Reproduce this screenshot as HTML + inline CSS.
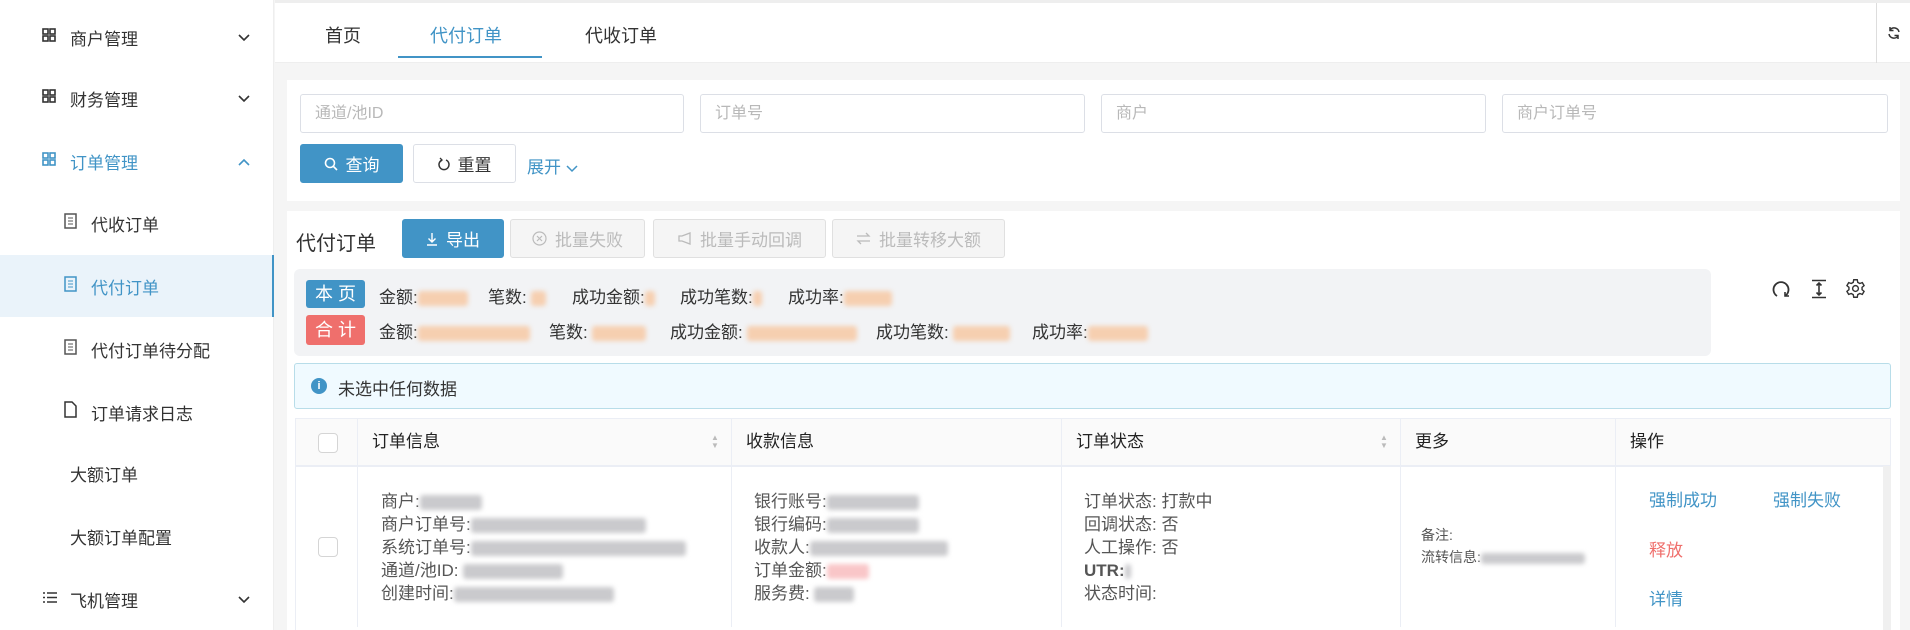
<!DOCTYPE html>
<html><head><meta charset="utf-8"><style>
*{box-sizing:border-box;margin:0;padding:0}
body{width:1910px;height:630px;overflow:hidden;background:#f5f5f5;font-family:"Liberation Sans","Noto Sans CJK SC",sans-serif;color:#333;position:relative}
.abs{position:absolute}
.side{left:0;top:0;width:274px;height:630px;background:#fff;border-right:1px solid #eee}
.mi{position:absolute;left:0;width:274px;height:62px;display:flex;align-items:center;font-size:17px;color:#333}
.mi .ic{position:absolute;left:42px}
.mi .tx{position:absolute;left:70px}
.mi .ar{position:absolute;left:238px;font-size:13px}
.sub .tx{left:91px}
.sub .ic{left:64px}
.blur{display:inline-block;filter:blur(2.5px);height:15px;vertical-align:middle;border-radius:3px}
.g{background:#cacacd}.o{background:#f6cfb0}.p{background:#f9c6c8}
.btn{position:absolute;height:39px;border:1px solid #dcdfe6;border-radius:3px;font-size:16px;display:flex;align-items:center;justify-content:center;gap:8px;background:#fff;color:#333}
.dis{background:#f5f5f5;color:#bbb;border-color:#e0e0e0}
.inp{position:absolute;top:94px;height:39px;border:1px solid #dcdfe6;border-radius:3px;padding-left:14px;line-height:37px;font-size:16px;color:#b8b8b8;background:#fff}
.th{position:absolute;top:418px;height:48px;line-height:48px;font-size:17px;color:#222;padding-left:14px;border-right:1px solid #ebeef5}
.td{position:absolute;top:466px;height:161px;border-right:1px solid #ebeef5;font-size:17px;color:#555}
.ln{position:absolute;line-height:23px;white-space:nowrap}
.lbl{font-size:17px;color:#333;white-space:nowrap}
</style></head><body>

<div class="abs side">
  <div class="mi" style="top:6px"><span class="ic"><svg width="14" height="14"><g fill="none" stroke="#333" stroke-width="1.6"><rect x="1" y="1" width="5" height="5"/><rect x="8" y="1" width="5" height="5"/><rect x="1" y="8" width="5" height="5"/><rect x="8" y="8" width="5" height="5"/></g></svg></span><span class="tx">商户管理</span><span class="ar"><svg width="12" height="8"><path d="M1 1l5 5 5-5" fill="none" stroke="#333" stroke-width="1.6"/></svg></span></div>
  <div class="mi" style="top:67px"><span class="ic"><svg width="14" height="14"><g fill="none" stroke="#333" stroke-width="1.6"><rect x="1" y="1" width="5" height="5"/><rect x="8" y="1" width="5" height="5"/><rect x="1" y="8" width="5" height="5"/><rect x="8" y="8" width="5" height="5"/></g></svg></span><span class="tx">财务管理</span><span class="ar"><svg width="12" height="8"><path d="M1 1l5 5 5-5" fill="none" stroke="#333" stroke-width="1.6"/></svg></span></div>
  <div class="mi" style="top:130px;color:#4194c6"><span class="ic"><svg width="14" height="14"><g fill="none" stroke="#4194c6" stroke-width="1.6"><rect x="1" y="1" width="5" height="5"/><rect x="8" y="1" width="5" height="5"/><rect x="1" y="8" width="5" height="5"/><rect x="8" y="8" width="5" height="5"/></g></svg></span><span class="tx">订单管理</span><span class="ar"><svg width="12" height="8"><path d="M1 7l5-5 5 5" fill="none" stroke="#4194c6" stroke-width="1.6"/></svg></span></div>
  <div class="mi sub" style="top:192px"><span class="ic"><svg width="13" height="16"><rect x="1" y="1" width="11" height="14" fill="none" stroke="#555" stroke-width="1.5"/><path d="M4 5h5M4 8h5M4 11h5" stroke="#555"/></svg></span><span class="tx">代收订单</span></div>
  <div class="mi sub" style="top:255px;background:#eaf3fa;color:#4194c6;border-right:2px solid #4194c6"><span class="ic"><svg width="13" height="16"><rect x="1" y="1" width="11" height="14" fill="none" stroke="#4194c6" stroke-width="1.5"/><path d="M4 5h5M4 8h5M4 11h5" stroke="#4194c6"/></svg></span><span class="tx">代付订单</span></div>
  <div class="mi sub" style="top:318px"><span class="ic"><svg width="13" height="16"><rect x="1" y="1" width="11" height="14" fill="none" stroke="#555" stroke-width="1.5"/><path d="M4 5h5M4 8h5M4 11h5" stroke="#555"/></svg></span><span class="tx">代付订单待分配</span></div>
  <div class="mi sub" style="top:381px"><span class="ic"><svg width="13" height="17"><path d="M1 1h7l4 4v11H1z" fill="none" stroke="#333" stroke-width="1.5"/></svg></span><span class="tx">订单请求日志</span></div>
  <div class="mi" style="top:442px"><span class="tx">大额订单</span></div>
  <div class="mi" style="top:505px"><span class="tx">大额订单配置</span></div>
  <div class="mi" style="top:568px"><span class="ic"><svg width="16" height="13"><path d="M1 2h2M5 2h10M1 6.5h2M5 6.5h10M1 11h2M5 11h10" stroke="#333" stroke-width="1.6"/></svg></span><span class="tx">飞机管理</span><span class="ar"><svg width="12" height="8"><path d="M1 1l5 5 5-5" fill="none" stroke="#333" stroke-width="1.6"/></svg></span></div>
</div>

<!-- tabs -->
<div class="abs" style="left:275px;top:0;width:1635px;height:63px;background:#fff;border-top:3px solid #eee;border-bottom:1px solid #eee"></div>
<div class="abs" style="left:325px;top:22px;font-size:18px;color:#333">首页</div>
<div class="abs" style="left:430px;top:22px;font-size:18px;color:#4194c6">代付订单</div>
<div class="abs" style="left:398px;top:56px;width:144px;height:2px;background:#4194c6"></div>
<div class="abs" style="left:585px;top:22px;font-size:18px;color:#333">代收订单</div>
<div class="abs" style="left:1876px;top:3px;width:34px;height:60px;border-left:1px solid #ddd;display:flex;align-items:center;justify-content:center"><svg width="14" height="14"><path d="M12 6A5 5 0 0 0 3 4M2 8a5 5 0 0 0 9 2" fill="none" stroke="#333" stroke-width="1.5"/><path d="M3 1v3.5h3.5M11 13V9.5H7.5" fill="none" stroke="#333" stroke-width="1.5"/></svg></div>

<!-- search card -->
<div class="abs" style="left:287px;top:80px;width:1613px;height:121px;background:#fff"></div>
<div class="inp" style="left:300px;width:384px">通道/池ID</div>
<div class="inp" style="left:700px;width:385px">订单号</div>
<div class="inp" style="left:1101px;width:385px">商户</div>
<div class="inp" style="left:1502px;width:386px">商户订单号</div>
<div class="btn" style="left:300px;top:144px;width:103px;background:#4194c6;border-color:#4194c6;color:#fff;font-size:17px"><svg width="14" height="14"><circle cx="6" cy="6" r="4.5" fill="none" stroke="#fff" stroke-width="1.6"/><path d="M9.5 9.5l3.5 3.5" stroke="#fff" stroke-width="1.6"/></svg>查询</div>
<div class="btn" style="left:413px;top:144px;width:103px;font-size:17px"><svg width="12" height="14"><path d="M4 3A5 5 0 1 0 8 3" fill="none" stroke="#333" stroke-width="1.5"/><path d="M2 1l2 2-2 2" fill="none" stroke="#333" stroke-width="1.3"/></svg>重置</div>
<div class="abs" style="left:527px;top:153px;font-size:17px;color:#4194c6">展开 <svg width="12" height="8"><path d="M1 1l5 5 5-5" fill="none" stroke="#4194c6" stroke-width="1.5"/></svg></div>

<!-- table card -->
<div class="abs" style="left:287px;top:211px;width:1613px;height:419px;background:#fff"></div>
<div class="abs" style="left:296px;top:227px;font-size:20px;color:#333">代付订单</div>
<div class="btn" style="left:402px;top:219px;width:102px;background:#4194c6;border-color:#4194c6;color:#fff;font-size:17px"><svg width="12" height="14"><path d="M6 1v9M2.5 6.5L6 10l3.5-3.5M1 13h10" fill="none" stroke="#fff" stroke-width="1.4"/></svg>导出</div>
<div class="btn dis" style="left:510px;top:219px;width:135px;font-size:17px"><svg width="15" height="15"><circle cx="7.5" cy="7.5" r="6.5" fill="none" stroke="#bbb" stroke-width="1.2"/><path d="M5 5l5 5M10 5l-5 5" stroke="#bbb" stroke-width="1.2"/></svg>批量失败</div>
<div class="btn dis" style="left:653px;top:219px;width:173px;font-size:17px"><svg width="15" height="15"><path d="M13 2v11L5 10H2V5h3z" fill="none" stroke="#bbb" stroke-width="1.3"/></svg>批量手动回调</div>
<div class="btn dis" style="left:832px;top:219px;width:173px;font-size:17px"><svg width="15" height="13"><path d="M1 4h12l-3-3M14 9H2l3 3" fill="none" stroke="#bbb" stroke-width="1.3"/></svg>批量转移大额</div>

<div class="abs" style="left:294px;top:269px;width:1417px;height:87px;background:#f2f3f5;border-radius:6px"></div>
<div class="abs" style="left:306px;top:280px;width:59px;height:28px;background:#4194c6;color:#fff;border-radius:3px;font-size:18px;text-align:center;line-height:28px">本 页</div>
<div class="abs" style="left:306px;top:315px;width:59px;height:30px;background:#ef6f6c;color:#fff;border-radius:3px;font-size:18px;text-align:center;line-height:30px">合 计</div>

<div class="abs lbl" style="left:379px;top:283px">金额:<span class="blur o" style="width:50px"></span></div>
<div class="abs lbl" style="left:488px;top:283px">笔数:&nbsp;<span class="blur o" style="width:15px"></span></div>
<div class="abs lbl" style="left:572px;top:283px">成功金额:<span class="blur o" style="width:10px"></span></div>
<div class="abs lbl" style="left:680px;top:283px">成功笔数:<span class="blur o" style="width:9px"></span></div>
<div class="abs lbl" style="left:788px;top:283px">成功率:<span class="blur o" style="width:48px"></span></div>

<div class="abs lbl" style="left:379px;top:318px">金额:<span class="blur o" style="width:112px"></span></div>
<div class="abs lbl" style="left:549px;top:318px">笔数:&nbsp;<span class="blur o" style="width:54px"></span></div>
<div class="abs lbl" style="left:670px;top:318px">成功金额:&nbsp;<span class="blur o" style="width:110px"></span></div>
<div class="abs lbl" style="left:876px;top:318px">成功笔数:&nbsp;<span class="blur o" style="width:57px"></span></div>
<div class="abs lbl" style="left:1032px;top:318px">成功率:<span class="blur o" style="width:60px"></span></div>

<div class="abs" style="left:1771px;top:279px"><svg width="20" height="20"><path d="M6 17A7.5 7.5 0 1 1 14 17" fill="none" stroke="#333" stroke-width="1.8"/><path d="M14 13v4h4" fill="none" stroke="#333" stroke-width="1.6"/></svg></div>
<div class="abs" style="left:1810px;top:279px"><svg width="18" height="20"><path d="M2 1.5h14M2 18.5h14M9 4v12M6.5 6.5L9 4l2.5 2.5M6.5 13.5L9 16l2.5-2.5" fill="none" stroke="#333" stroke-width="1.6"/></svg></div>
<div class="abs" style="left:1845px;top:278px"><svg width="21" height="21" viewBox="0 0 24 24"><path d="M10 2h4l.6 3 2.3 1.3 2.9-1 2 3.4-2.3 2v2.6l2.3 2-2 3.4-2.9-1-2.3 1.3-.6 3h-4l-.6-3-2.3-1.3-2.9 1-2-3.4 2.3-2v-2.6l-2.3-2 2-3.4 2.9 1L9.4 5z" fill="none" stroke="#333" stroke-width="1.6"/><circle cx="12" cy="12" r="3.3" fill="none" stroke="#333" stroke-width="1.6"/></svg></div>

<div class="abs" style="left:294px;top:363px;width:1597px;height:46px;background:#f0faff;border:1px solid #b8dde9;border-radius:3px"></div>
<div class="abs" style="left:311px;top:378px;width:16px;height:16px;border-radius:50%;background:#4194c6;color:#fff;font-size:11px;text-align:center;line-height:16px;font-weight:bold">i</div>
<div class="abs" style="left:338px;top:375px;font-size:17px;color:#333">未选中任何数据</div>

<!-- table -->
<div class="abs" style="left:295px;top:418px;width:1596px;height:48px;background:#fafafa;border:1px solid #ebeef5"></div>
<div class="abs" style="left:295px;top:466px;width:1596px;height:164px;border-left:1px solid #ebeef5;border-top:1px solid #ebeef5"></div>
<div class="th" style="left:295px;width:63px"></div>
<div class="abs" style="left:318px;top:433px;width:20px;height:20px;border:1px solid #d5d5d5;border-radius:4px;background:#fff"></div>
<div class="th" style="left:358px;width:374px">订单信息</div>
<div class="abs" style="left:711px;top:434px;font-size:8px;color:#bbb;line-height:8px">▲<br>▼</div>
<div class="th" style="left:732px;width:330px">收款信息</div>
<div class="th" style="left:1062px;width:339px">订单状态</div>
<div class="abs" style="left:1380px;top:434px;font-size:8px;color:#bbb;line-height:8px">▲<br>▼</div>
<div class="th" style="left:1401px;width:215px">更多</div>
<div class="th" style="left:1616px;width:275px;border-right:none">操作</div>

<div class="td" style="left:295px;width:63px"></div>
<div class="abs" style="left:318px;top:537px;width:20px;height:20px;border:1px solid #d5d5d5;border-radius:4px;background:#fff"></div>
<div class="td" style="left:358px;width:374px">
  <div class="ln" style="left:23px;top:24px">商户:<span class="blur g" style="width:62px"></span></div>
  <div class="ln" style="left:23px;top:47px">商户订单号:<span class="blur g" style="width:175px"></span></div>
  <div class="ln" style="left:23px;top:70px">系统订单号:<span class="blur g" style="width:215px"></span></div>
  <div class="ln" style="left:23px;top:93px">通道/池ID:&nbsp;<span class="blur g" style="width:100px"></span></div>
  <div class="ln" style="left:23px;top:116px">创建时间:<span class="blur g" style="width:160px"></span></div>
</div>
<div class="td" style="left:732px;width:330px">
  <div class="ln" style="left:22px;top:24px">银行账号:<span class="blur g" style="width:92px"></span></div>
  <div class="ln" style="left:22px;top:47px">银行编码:<span class="blur g" style="width:92px"></span></div>
  <div class="ln" style="left:22px;top:70px">收款人:<span class="blur g" style="width:138px"></span></div>
  <div class="ln" style="left:22px;top:93px">订单金额:<span class="blur p" style="width:42px"></span></div>
  <div class="ln" style="left:22px;top:116px">服务费:&nbsp;<span class="blur g" style="width:40px"></span></div>
</div>
<div class="td" style="left:1062px;width:339px">
  <div class="ln" style="left:22px;top:24px">订单状态: 打款中</div>
  <div class="ln" style="left:22px;top:47px">回调状态: 否</div>
  <div class="ln" style="left:22px;top:70px">人工操作: 否</div>
  <div class="ln" style="left:22px;top:93px;font-weight:bold">UTR:<span class="blur g" style="width:6px"></span></div>
  <div class="ln" style="left:22px;top:116px">状态时间:</div>
</div>
<div class="td" style="left:1401px;width:215px;font-size:14px">
  <div class="ln" style="left:20px;top:58px">备注:</div>
  <div class="ln" style="left:20px;top:80px">流转信息:<span class="blur g" style="width:104px;height:11px"></span></div>
</div>
<div class="td" style="left:1616px;width:275px;border-right:none">
  <div class="ln" style="left:33px;top:23px;color:#4194c6">强制成功</div>
  <div class="ln" style="left:157px;top:23px;color:#4194c6">强制失败</div>
  <div class="ln" style="left:33px;top:73px;color:#ef6f6c">释放</div>
  <div class="ln" style="left:33px;top:122px;color:#4194c6">详情</div>
</div>
<div class="abs" style="left:1883px;top:466px;width:8px;height:164px;background:#f0f0f0"></div>
</body></html>
